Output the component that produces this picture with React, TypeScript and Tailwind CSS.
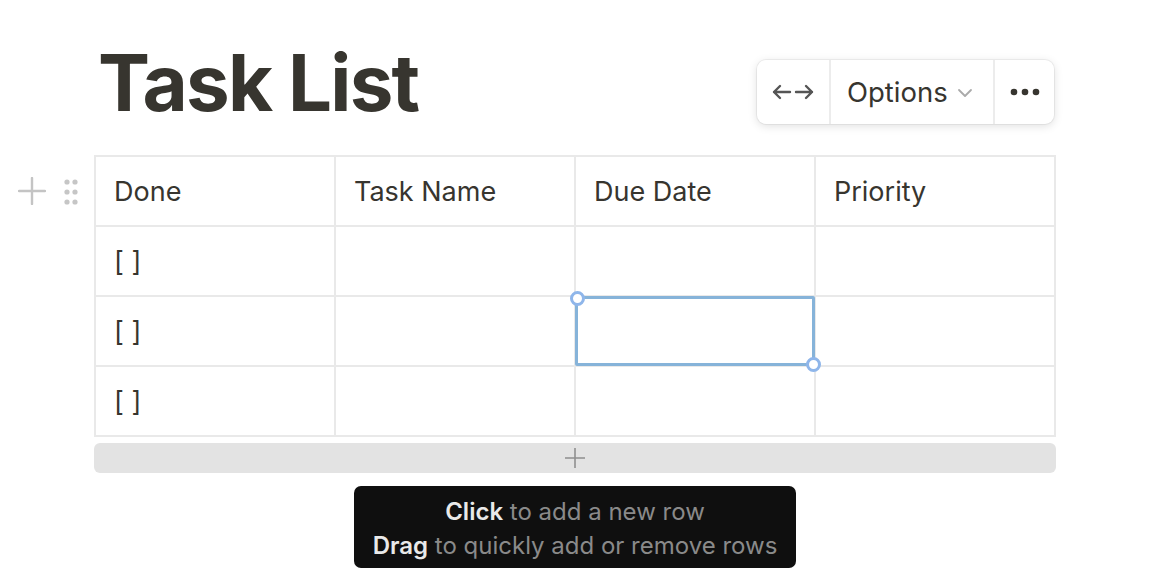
import React from "react";

const font = { fontFamily: "Inter, 'Noto Sans', sans-serif" };

function Cell({ children, selected }: { children?: React.ReactNode; selected?: boolean }) {
  return (
    <div className={"relative bg-white h-[68px] flex items-center pl-[18px] pt-[3px] text-[27px] text-[#37352f]" + (selected ? " z-10" : "")}>
      {children}
      {selected && (
        <div className="absolute left-[-1px] top-[-1px] right-[-1px] bottom-[-1px] border-[3px] border-[#86b3d9] rounded-[2px]">
          <div className="absolute left-[-8px] top-[-8px] w-[15px] h-[15px] rounded-full border-[3px] border-[#8fb6ea] bg-white" />
          <div className="absolute right-[-9px] bottom-[-9px] w-[15px] h-[15px] rounded-full border-[3px] border-[#8fb6ea] bg-white" />
        </div>
      )}
    </div>
  );
}

export default function App() {
  return (
    <div className="relative w-[1152px] h-[578px] bg-white overflow-hidden" style={font}>
      <div className="pt-[38px]">
        <h1 className="ml-[98px] text-[78px] leading-[90px] font-bold tracking-[-1.8px] text-[#37352f]">Task List</h1>

        <div className="flex mt-[27px]">
          <div className="w-[94px] flex items-start justify-end gap-[18px] pr-[16px] pt-[22px]">
            <svg width="28" height="28" viewBox="0 0 28 28" className="-ml-[6px]">
              <path d="M14 1v26M1 14h26" stroke="#c4c4c4" strokeWidth="2.4" strokeLinecap="round" />
            </svg>
            <svg width="14" height="26" viewBox="0 0 14 26" className="mt-[2px]">
              {[3, 13, 23].map((y) => (
                <g key={y}>
                  <circle cx="3" cy={y} r="2.6" fill="#c6c6c6" />
                  <circle cx="11" cy={y} r="2.6" fill="#c6c6c6" />
                </g>
              ))}
            </svg>
          </div>

          <div className="w-[962px]">
            <div className="grid grid-cols-4 gap-[2px] p-[2px] bg-[#e9e9e9]">
              <Cell>Done</Cell>
              <Cell>Task Name</Cell>
              <Cell>Due Date</Cell>
              <Cell>Priority</Cell>
              <Cell>[ ]</Cell>
              <Cell />
              <Cell />
              <Cell />
              <Cell>[ ]</Cell>
              <Cell />
              <Cell selected />
              <Cell />
              <Cell>[ ]</Cell>
              <Cell />
              <Cell />
              <Cell />
            </div>
            <div className="mt-[6px] h-[30px] rounded-[6px] bg-[#e3e3e3] flex items-center justify-center">
              <svg width="22" height="22" viewBox="0 0 22 22">
                <path d="M11 1v20M1 11h20" stroke="#8f8f8f" strokeWidth="1.6" />
              </svg>
            </div>
          </div>
        </div>
      </div>

      {/* floating toolbar */}
      <div className="absolute left-[757px] top-[60px] w-[297px] h-[64px] bg-white rounded-[9px] shadow-[0_2px_10px_rgba(0,0,0,0.13),0_0_0_1px_rgba(0,0,0,0.05)] flex">
        <div className="w-[74px] flex items-center justify-center border-r-[2px] border-[#ececec]">
          <svg width="42" height="18" viewBox="0 0 42 18" fill="none" stroke="#555" strokeWidth="2.4" strokeLinecap="round" strokeLinejoin="round">
            <path d="M8 3L2 9l6 6M2 9h16" />
            <path d="M34 3l6 6-6 6M40 9H24" />
          </svg>
        </div>
        <div className="w-[164px] flex items-center pl-[16px] pt-[2px] border-r-[2px] border-[#ececec]">
          <span className="text-[27.5px] text-[#37352f]">Options</span>
          <svg width="16" height="10" viewBox="0 0 16 10" className="ml-[9px] -mt-[1px]" fill="none" stroke="#aaa" strokeWidth="1.8" strokeLinecap="round" strokeLinejoin="round">
            <path d="M2 2l6 6 6-6" />
          </svg>
        </div>
        <div className="flex-1 flex items-center justify-center">
          <svg width="30" height="8" viewBox="0 0 30 8">
            <circle cx="4" cy="4" r="3.3" fill="#37352f" />
            <circle cx="15" cy="4" r="3.3" fill="#37352f" />
            <circle cx="26" cy="4" r="3.3" fill="#37352f" />
          </svg>
        </div>
      </div>

      {/* tooltip */}
      <div className="absolute left-[354px] top-[486px] w-[442px] h-[82px] pt-[3px] rounded-[7px] bg-[#0f0f0f] flex flex-col items-center justify-center text-[24px] leading-[34px]">
        <div>
          <span className="font-semibold text-[#e9e9e9]">Click</span>
          <span className="text-[#8a8a8a]"> to add a new row</span>
        </div>
        <div>
          <span className="font-semibold text-[#e9e9e9]">Drag</span>
          <span className="text-[#8a8a8a]"> to quickly add or remove rows</span>
        </div>
      </div>
    </div>
  );
}
